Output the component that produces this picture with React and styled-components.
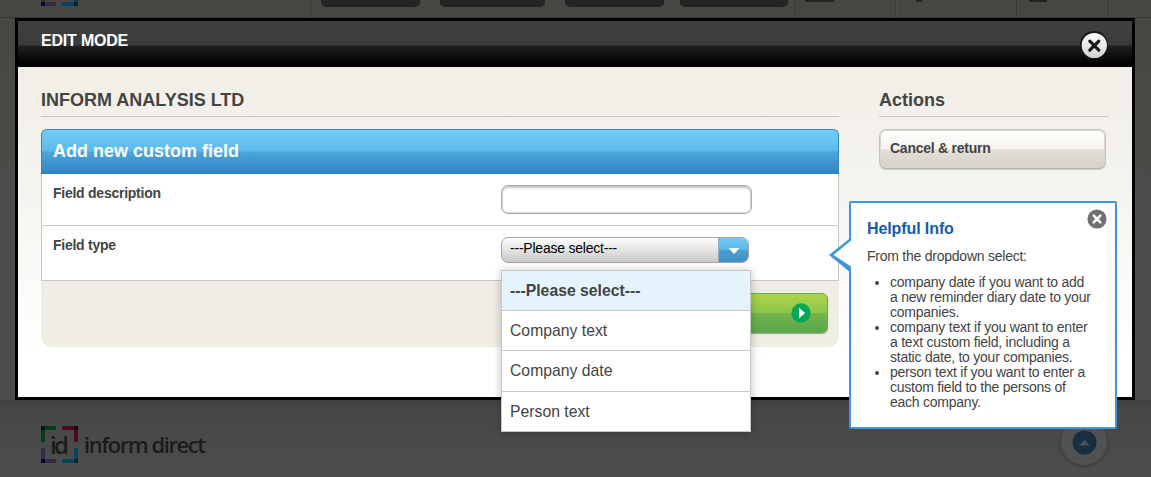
import React from 'react'
import styled, { createGlobalStyle } from 'styled-components'

const options = [
  '---Please select---',
  'Company text',
  'Company date',
  'Person text',
]

const tips = [
  'company date if you want to add a new reminder diary date to your companies.',
  'company text if you want to enter a text custom field, including a static date, to your companies.',
  'person text if you want to enter a custom field to the persons of each company.',
]

const LogoMark = () => (
  <g>
    <path d='M0 16V0H15V4H4V16Z' fill='#07391d' />
    <path d='M21 0H37V16H33V4H21Z' fill='#4b0a20' />
    <path d='M0 22V37H15V33H4V22Z' fill='#322b45' />
    <path d='M37 22V37H21V33H33V22Z' fill='#07425a' />
    <path d='M0 0h4v4H0z' fill='#04180d' />
    <path d='M33 0h4v4H33z' fill='#270414' />
    <path d='M0 33h4v4H0z' fill='#0d0626' />
    <path d='M33 33h4v4H33z' fill='#082035' />
  </g>
)

const App = () => {
  return (
    <Page>
      <GlobalStyle />
      <TopBar>
        <TopLogo width='37' height='6' viewBox='0 31 37 6'>
          <LogoMark />
        </TopLogo>
        <NavGroup>
          <NavButton $w={99} $gap={20} />
          <NavButton $w={105} $gap={20} />
          <NavButton $w={99} $gap={16} />
          <NavButton $w={108} $gap={0} />
        </NavGroup>
        <NavCell $w={100} $pad={9}>
          <NavIcon $w={29} />
        </NavCell>
        <NavCell $w={121} $pad={20}>
          <NavIcon $w={6} />
        </NavCell>
        <NavCell $w={92} $pad={12}>
          <NavIcon $w={18} />
        </NavCell>
        <NavCell $w={43} $pad={0} />
      </TopBar>

      <Body>
        <Modal>
          <ModalHeader>
            <ModalTitle>EDIT MODE</ModalTitle>
            <CloseButton>
              <svg width='28' height='28' viewBox='0 0 28 28'>
                <defs>
                  <linearGradient id='closeFill' x1='0' y1='0' x2='0' y2='1'>
                    <stop offset='0' stopColor='#fff' />
                    <stop offset='1' stopColor='#d2d2d2' />
                  </linearGradient>
                </defs>
                <circle cx='14' cy='14' r='14' fill='#161616' />
                <circle cx='14.3' cy='14.5' r='12.6' fill='url(#closeFill)' />
                <path
                  d='M9.8 10.2l9 9M18.8 10.2l-9 9'
                  stroke='#1a1a1a'
                  strokeWidth='3.2'
                  strokeLinecap='round'
                />
              </svg>
            </CloseButton>
          </ModalHeader>

          <Content>
            <Main>
              <Heading>INFORM ANALYSIS LTD</Heading>
              <PanelHeader>Add new custom field</PanelHeader>
              <Row $h={51}>
                <Label>Field description</Label>
                <TextInput />
              </Row>
              <Row $h={54}>
                <Label>Field type</Label>
                <SelectWrap>
                  <Select>
                    <SelectValue>---Please select---</SelectValue>
                    <SelectArrow>
                      <svg width='12' height='6' viewBox='0 0 12 6'>
                        <path d='M0.5 0h11L6 6z' fill='#fff' />
                      </svg>
                    </SelectArrow>
                  </Select>
                  <Menu>
                    {options.map((option, i) => (
                      <Option key={option} $active={i === 0} $tall={i === 2}>
                        {option}
                      </Option>
                    ))}
                  </Menu>
                </SelectWrap>
              </Row>
              <PanelFooter>
                <SaveButton>
                  <svg width='20' height='20' viewBox='0 0 20 20'>
                    <circle cx='10' cy='10' r='9.7' fill='#04a755' />
                    <path d='M8 4.8v10.6l6-5.3z' fill='#fff' />
                  </svg>
                </SaveButton>
              </PanelFooter>
            </Main>

            <Side>
              <Heading>Actions</Heading>
              <CancelButton>Cancel &amp; return</CancelButton>
              <Info>
                <Pointer width='24' height='40' viewBox='0 0 24 40'>
                  <path d='M24 4L3 20L24 36z' fill='#fff' />
                  <path
                    d='M22 2.5L0 20L22 38V31.5L4.5 20L22 5.5z'
                    fill='#3f97d3'
                  />
                </Pointer>
                <InfoClose>
                  <svg width='20' height='20' viewBox='0 0 20 20'>
                    <circle cx='10' cy='10' r='9.6' fill='#707070' />
                    <path
                      d='M6.7 6.7l6.6 6.6M13.3 6.7l-6.6 6.6'
                      stroke='#fff'
                      strokeWidth='2.6'
                      strokeLinecap='round'
                    />
                  </svg>
                </InfoClose>
                <InfoTitle>Helpful Info</InfoTitle>
                <InfoText>From the dropdown select:</InfoText>
                <InfoList>
                  {tips.map((tip) => (
                    <li key={tip}>{tip}</li>
                  ))}
                </InfoList>
              </Info>
            </Side>
          </Content>
        </Modal>
      </Body>

      <Footer>
        <svg width='170' height='42' viewBox='0 0 170 42'>
          <LogoMark />
          <LogoText x='9' y='27.5' textLength='19' $size={24} $weight={600}>
            id
          </LogoText>
          <LogoText x='43' y='27' textLength='122' $size={22} $weight={600}>
            inform direct
          </LogoText>
        </svg>
        <ToTop>
          <svg width='25' height='25' viewBox='0 0 25 25'>
            <circle cx='12.5' cy='12.5' r='12' fill='#172f41' />
            <path d='M7 15.5h11L12.5 9.7z' fill='#505050' />
          </svg>
        </ToTop>
      </Footer>
    </Page>
  )
}

export default App

const GlobalStyle = createGlobalStyle`
  * {
    box-sizing: border-box;
  }

  body {
    margin: 0;
    overflow: hidden;
    font-family: 'Liberation Sans', Arial, sans-serif;
    color: #444;
  }

  svg {
    display: block;
    flex-shrink: 0;
  }
`

const Page = styled.div`
  width: 1151px;
  height: 477px;
  overflow: hidden;
  display: flex;
  flex-direction: column;
  background: #4c4c4c;
`

const TopBar = styled.div`
  display: flex;
  flex: 0 0 18px;
  height: 18px;
  background: #474642;
  border-bottom: 1px solid #3a3a37;
`

const TopLogo = styled.svg`
  margin: 0 232px 0 41px;
`

const NavGroup = styled.div`
  display: flex;
  width: 485px;
  padding-left: 10px;
  border-left: 1px solid #3b3a37;
`

const NavButton = styled.div`
  width: ${({ $w }) => $w}px;
  height: 7px;
  margin-right: ${({ $gap }) => $gap}px;
  background: #242424;
  border-radius: 0 0 5px 5px;
`

const NavCell = styled.div`
  width: ${({ $w }) => $w}px;
  padding-left: ${({ $pad }) => $pad}px;
  border-left: 1px solid #3b3a37;
  box-shadow: inset 1px 0 #4d4c48;
`

const NavIcon = styled.div`
  width: ${({ $w }) => $w}px;
  height: 2px;
  background: #232323;
`

const Body = styled.div`
  flex: 0 0 382px;
  padding: 0 16px 0 15px;
  background: linear-gradient(#484842, #4c4c4c 60%);
`

const Modal = styled.div`
  height: 382px;
  border: 3px solid #000;
  background: #fff;
`

const ModalHeader = styled.div`
  display: flex;
  justify-content: space-between;
  height: 46px;
  padding: 0 24px 0 23px;
  background: linear-gradient(
    #3f3f3f,
    #3b3b3b 24px,
    #202020 25px,
    #030303 41px,
    #000 42px
  );
`

const ModalTitle = styled.div`
  font-size: 16px;
  letter-spacing: -0.2px;
  line-height: 18px;
  font-weight: bold;
  color: #fff;
  padding-top: 11px;
`

const CloseButton = styled.div`
  padding-top: 10px;
`

const Content = styled.div`
  display: flex;
  gap: 40px;
  height: 330px;
  padding: 22px 23px 0;
  background: linear-gradient(#f1eee7, #f5f3ee 100px, #fff 290px);
`

const Main = styled.div`
  width: 798px;
`

const Side = styled.div`
  position: relative;
  width: 230px;
`

const Heading = styled.h2`
  height: 28px;
  margin: 0 0 12px;
  border-bottom: 1px solid #c8c6c1;
  font-size: 18px;
  line-height: 22px;
  font-weight: bold;
`

const PanelHeader = styled.div`
  height: 45px;
  padding-left: 11px;
  border: 1px solid #3585c2;
  border-bottom: none;
  border-radius: 6px 6px 0 0;
  background: linear-gradient(
    #73cff8,
    #5bbaeb 21px,
    #4ba5db 22px,
    #3183c2 44px
  );
  color: #fff;
  font-size: 18px;
  font-weight: bold;
  line-height: 42px;
`

const Row = styled.div`
  display: flex;
  height: ${({ $h }) => $h + 1}px;
  padding: 11px 0 0 11px;
  border: 1px solid #c9c9c9;
  border-top: none;
  background: #fff;
`

const Label = styled.div`
  width: 448px;
  font-size: 14px;
  letter-spacing: -0.25px;
  line-height: 16px;
  font-weight: bold;
`

const TextInput = styled.input`
  width: 251px;
  height: 29px;
  border: 1px solid #a9a9a9;
  border-radius: 7px;
  box-shadow: inset 0 2px 2px #c8c8c8, inset 0 0 1px 1px #ddd;
  background: #fff;
`

const SelectWrap = styled.div`
  position: relative;
`

const Select = styled.div`
  display: flex;
  width: 248px;
  height: 26px;
  border: 1px solid #a5a5a5;
  border-radius: 7px;
  overflow: hidden;
  background: linear-gradient(#fdfdfd, #c9c9c9);
`

const SelectValue = styled.div`
  flex: 1;
  padding-left: 8px;
  border-right: 1px solid #9aa9b3;
  font-size: 14px;
  letter-spacing: -0.22px;
  line-height: 21px;
  color: #000;
`

const SelectArrow = styled.div`
  display: flex;
  justify-content: center;
  width: 30px;
  height: 26px;
  margin: -1px -1px 0 0;
  padding-top: 11px;
  background: linear-gradient(#73cdf5, #5bb7e5 50%, #4b9fd0 52%, #3f8fc4);
`

const Menu = styled.div`
  position: absolute;
  top: 33px;
  left: 0;
  z-index: 2;
  width: 250px;
  border: 1px solid #c6c6c6;
  background: #fff;
  box-shadow: 0 1px 9px rgba(0, 0, 0, 0.25);
`

const Option = styled.div`
  height: ${({ $tall }) => ($tall ? 41 : 40)}px;
  padding-left: 8px;
  border-bottom: 1px solid #c9c9c9;
  background: ${({ $active }) => ($active ? '#e5f3fd' : '#fff')};
  font-size: 15.75px;
  font-weight: ${({ $active }) => ($active ? 'bold' : 'normal')};
  line-height: 39px;

  &:last-child {
    height: 39px;
    border-bottom: none;
  }
`

const PanelFooter = styled.div`
  display: flex;
  justify-content: flex-end;
  height: 66px;
  padding: 12px 11px 0 0;
  background: #f0ede6;
  border-radius: 0 0 11px 11px;
`

const SaveButton = styled.div`
  display: flex;
  align-items: center;
  justify-content: flex-end;
  width: 150px;
  height: 40px;
  padding-right: 16px;
  border: 1px solid #67ac4a;
  border-radius: 6px;
  box-shadow: 0 1px 1px #999;
  background: linear-gradient(#b0d548, #8cc64a 49%, #77b44d 51%, #57a84c);
`

const CancelButton = styled.div`
  width: 227px;
  height: 40px;
  padding-left: 10px;
  border: 1px solid #c5c3c0;
  border-bottom-color: #b3b1ad;
  border-radius: 7px;
  box-shadow: inset 0 0 0 1px #d9d7d3, 0 1px 1px #d0cec9;
  background: linear-gradient(#fff, #f5f3ef 50%, #e3e0d9 52%, #d7d1c6);
  font-size: 14px;
  letter-spacing: -0.25px;
  font-weight: bold;
  line-height: 37px;
`

const Info = styled.div`
  position: absolute;
  top: 112px;
  left: -30px;
  z-index: 3;
  width: 268px;
  height: 228px;
  padding: 17px 20px 0 16px;
  border: 2px solid #3f97d3;
  border-radius: 2px;
  background: #fff;
`

const Pointer = styled.svg`
  position: absolute;
  top: 32px;
  left: -22px;
`

const InfoClose = styled.div`
  position: absolute;
  top: 6px;
  right: 8px;
`

const InfoTitle = styled.h3`
  margin: 0;
  font-size: 16px;
  letter-spacing: -0.1px;
  line-height: 18px;
  color: #165caa;
`

const InfoText = styled.p`
  margin: 11px 0 0;
  font-size: 14px;
  letter-spacing: -0.24px;
  line-height: 15px;
`

const InfoList = styled.ul`
  margin: 11px 0 0;
  padding-left: 23px;
  font-size: 14px;
  letter-spacing: -0.24px;
  line-height: 15px;
`

const Footer = styled.div`
  display: flex;
  justify-content: space-between;
  height: 77px;
  padding: 26px 44px 0 41px;
  background: linear-gradient(#404040, #474747 8px, #4d4d4d);
`

const LogoText = styled.text`
  font-family: 'Open Sans', 'Noto Sans', sans-serif;
  font-size: ${({ $size }) => $size}px;
  font-weight: ${({ $weight }) => $weight};
  fill: #1b1b1b;
`

const ToTop = styled.div`
  display: flex;
  justify-content: center;
  width: 46px;
  height: 46px;
  margin-top: -7px;
  padding-top: 11px;
  border-radius: 50%;
  background: #515151;
  box-shadow: 0 1px 4px rgba(0, 0, 0, 0.3);
`
